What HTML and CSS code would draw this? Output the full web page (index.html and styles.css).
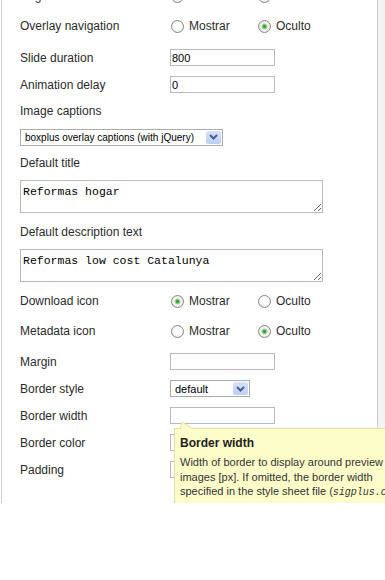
FILE: index.html
```html
<!DOCTYPE html>
<html lang="es">
<head>
    <meta charset="UTF-8">
    <meta name="viewport" content="width=device-width, initial-scale=1.0">
    <title>sigplus parameters</title>
    <link rel="stylesheet" href="styles.css">
</head>
<body>
    <div class="frame">
        <div class="panel">
            <div class="form">
                <div class="row pick">
                    <span class="label">Page counter</span>
                    <label class="choice first"><input type="radio" name="counter"><span>Mostrar</span></label>
                    <label class="choice"><input type="radio" name="counter" checked><span>Oculto</span></label>
                </div>
                <div class="row pick">
                    <span class="label">Overlay navigation</span>
                    <label class="choice first"><input type="radio" name="overlay"><span>Mostrar</span></label>
                    <label class="choice"><input type="radio" name="overlay" checked><span>Oculto</span></label>
                </div>
                <div class="row gap-3">
                    <span class="label">Slide duration</span>
                    <input type="text" class="text" value="800">
                </div>
                <div class="row">
                    <span class="label">Animation delay</span>
                    <input type="text" class="text" value="0">
                </div>
                <div class="row head">
                    <span class="label">Image captions</span>
                </div>
                <div class="row head">
                    <div class="select wide">
                        <span class="select-value">boxplus overlay captions (with jQuery)</span>
                        <span class="select-arrow">
                            <svg width="9" height="6" viewBox="0 0 9 6"><polyline points="1,1 4.5,4.5 8,1" fill="none" stroke="#4a5f8c" stroke-width="2"/></svg>
                        </span>
                    </div>
                </div>
                <div class="row head">
                    <span class="label">Default title</span>
                </div>
                <textarea class="area">Reformas hogar</textarea>
                <div class="row head">
                    <span class="label">Default description text</span>
                </div>
                <textarea class="area last">Reformas low cost Catalunya</textarea>
                <div class="row pick">
                    <span class="label">Download icon</span>
                    <label class="choice first"><input type="radio" name="download" checked><span>Mostrar</span></label>
                    <label class="choice"><input type="radio" name="download"><span>Oculto</span></label>
                </div>
                <div class="row pick">
                    <span class="label">Metadata icon</span>
                    <label class="choice first"><input type="radio" name="metadata"><span>Mostrar</span></label>
                    <label class="choice"><input type="radio" name="metadata" checked><span>Oculto</span></label>
                </div>
                <div class="row gap-2">
                    <span class="label">Margin</span>
                    <input type="text" class="text">
                </div>
                <div class="row">
                    <span class="label">Border style</span>
                    <div class="select small">
                        <span class="select-value">default</span>
                        <span class="select-arrow">
                            <svg width="9" height="6" viewBox="0 0 9 6"><polyline points="1,1 4.5,4.5 8,1" fill="none" stroke="#4a5f8c" stroke-width="2"/></svg>
                        </span>
                    </div>
                </div>
                <div class="row">
                    <span class="label">Border width</span>
                    <input type="text" class="text">
                </div>
                <div class="row">
                    <span class="label">Border color</span>
                    <input type="text" class="text">
                </div>
                <div class="row">
                    <span class="label">Padding</span>
                    <input type="text" class="text">
                </div>
            </div>
        </div>
        <div class="gutter"></div>

        <div class="tooltip">
            <svg class="tooltip-tip" width="16" height="8" viewBox="0 0 16 8">
                <polygon points="2,8 4,1 15,8" fill="#fdfdca"/>
                <polyline points="2,8 4,1 15,8" fill="none" stroke="#e2e2a6" stroke-width="1"/>
            </svg>
            <div class="tooltip-title">Border width</div>
            <div class="tooltip-body">
                Width of border to display around preview<br>
                images [px]. If omitted, the border width<br>
                specified in the style sheet file (<code>sigplus.css</code>)<br>
                applies.
            </div>
        </div>
    </div>
</body>
</html>
```

FILE: styles.css
```css
* {
    margin: 0;
    padding: 0;
    box-sizing: border-box;
}

body {
    font-family: "Liberation Sans", Arial, sans-serif;
    font-size: 12px;
    color: #2b2b2b;
    background: #fff;
}

.frame {
    position: relative;
    display: flex;
    height: 503px;
    overflow: hidden;
}

.panel {
    width: 377px;
    margin-left: 1px;
    border-left: 1px solid #cfcfcf;
    border-right: 1px solid #cfcfcf;
    background: #fff;
    flex-shrink: 0;
}

.gutter {
    flex: 1;
    background: #f4f4f4;
}

.form {
    margin-top: -19px;
    padding-left: 18px;
}

.row {
    display: flex;
    align-items: center;
    height: 27px;
}

.row.pick { height: 30px; }
.row.head { height: 26px; }
.row.gap-3 { margin-top: 3px; }
.row.gap-2 { margin-top: 2px; }

.label {
    width: 150px;
    flex-shrink: 0;
}

.choice {
    display: flex;
    align-items: center;
}

.choice.first {
    width: 87px;
}

.choice input {
    appearance: none;
    -webkit-appearance: none;
    width: 13px;
    height: 13px;
    margin: 0 5px 0 1px;
    border: 1px solid #858585;
    border-radius: 50%;
    background: radial-gradient(circle at 50% 40%, #ffffff 35%, #e2e2dc 100%);
}

.choice input:checked {
    background: radial-gradient(circle, #3a9f3a 0, #3a9f3a 1.2px, #a9d9a9 2.4px, #f6f6f2 3.6px, #dedcd6 100%);
}

.text {
    width: 105px;
    height: 17px;
    border: 1px solid #b9b9b9;
    padding: 0 1px;
    font-family: "Liberation Sans", Arial, sans-serif;
    font-size: 11px;
    color: #000;
    background: #fff;
    outline: none;
}

.select {
    display: flex;
    align-items: center;
    height: 17px;
    border: 1px solid #ababab;
    background: #fff;
    font-size: 11px;
    color: #000;
}

.select.wide { width: 203px; }
.select.wide .select-value { font-size: 10px; }
.select.small { width: 80px; }

.select-value {
    flex: 1;
    padding-left: 4px;
    white-space: nowrap;
    overflow: hidden;
}

.select-arrow {
    width: 15px;
    height: 13px;
    margin-right: 1px;
    border-radius: 2px;
    background: linear-gradient(#d6e2fa, #bccff4);
    display: flex;
    align-items: center;
    justify-content: center;
}

.area {
    display: block;
    width: 303px;
    height: 33px;
    margin: 4px 0 6px;
    padding: 4px 2px;
    border: 1px solid #b9b9b9;
    font-family: "Liberation Mono", "Courier New", monospace;
    font-size: 11.5px;
    line-height: 13px;
    color: #000;
    outline: none;
}

.area.last {
    margin-bottom: 4px;
}

.tooltip {
    position: absolute;
    left: 174px;
    top: 428px;
    width: 240px;
    background: #fdfdca;
    border: 1px solid #e2e2a6;
    padding: 6px 5px 8px;
    color: #333;
}

.tooltip-tip {
    position: absolute;
    left: 3px;
    top: -8px;
}

.tooltip-title {
    font-weight: bold;
    font-size: 12px;
    line-height: 16px;
    color: #222;
}

.tooltip-body {
    padding-top: 4px;
    font-size: 11px;
    line-height: 14.5px;
    white-space: nowrap;
}

.tooltip-body code {
    font-family: "Liberation Mono", "Courier New", monospace;
    font-size: 10px;
    font-style: italic;
}
```
